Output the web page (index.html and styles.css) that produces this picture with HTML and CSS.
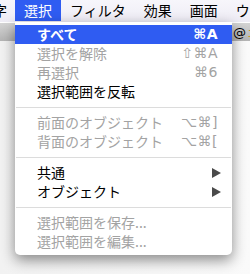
FILE: index.html
```html
<!DOCTYPE html>
<html lang="ja">
<head>
    <meta charset="UTF-8">
    <title>選択メニュー</title>
    <link rel="stylesheet" href="styles.css">
</head>
<body>
    <div class="menubar">
        <span class="menubar-item cut">文字</span>
        <span class="menubar-item active">選択</span>
        <span class="menubar-item">フィルタ</span>
        <span class="menubar-item">効果</span>
        <span class="menubar-item">画面</span>
        <span class="menubar-item">ウィンドウ</span>
    </div>
    <div class="toolbar">
        <span class="tool-at">@</span>
        <span class="tool-mark">ﾆ</span>
    </div>
    <div class="content"></div>

    <!-- dropdown menu -->
    <div class="menu">
        <div class="menu-item selected">
            <span class="label">すべて</span>
            <span class="key">⌘A</span>
        </div>
        <div class="menu-item disabled">
            <span class="label">選択を解除</span>
            <span class="key">⇧⌘A</span>
        </div>
        <div class="menu-item disabled">
            <span class="label">再選択</span>
            <span class="key">⌘6</span>
        </div>
        <div class="menu-item">
            <span class="label">選択範囲を反転</span>
        </div>
        <div class="separator"></div>
        <div class="menu-item disabled">
            <span class="label">前面のオブジェクト</span>
            <span class="key">⌥⌘]</span>
        </div>
        <div class="menu-item disabled">
            <span class="label">背面のオブジェクト</span>
            <span class="key">⌥⌘[</span>
        </div>
        <div class="separator"></div>
        <div class="menu-item">
            <span class="label">共通</span>
            <span class="arrow"></span>
        </div>
        <div class="menu-item">
            <span class="label">オブジェクト</span>
            <span class="arrow"></span>
        </div>
        <div class="separator"></div>
        <div class="menu-item disabled">
            <span class="label">選択範囲を保存...</span>
        </div>
        <div class="menu-item disabled">
            <span class="label">選択範囲を編集...</span>
        </div>
    </div>
</body>
</html>
```

FILE: styles.css
```css
/* Global */
* {
    margin: 0;
    padding: 0;
    box-sizing: border-box;
}

body {
    width: 250px;
    height: 274px;
    overflow: hidden;
    position: relative;
    background: #f4f4f4;
    font-family: "Noto Sans CJK JP", sans-serif;
    font-size: 14px;
    color: #000;
}

/* Menu bar */
.menubar {
    display: flex;
    height: 22px;
    background: linear-gradient(#f7f6fb, #eeecf5);
    white-space: nowrap;
    overflow: hidden;
}

.menubar-item {
    padding: 0 9px;
    line-height: 21px;
    height: 21px;
}

.menubar-item.cut {
    margin-left: -30px;
    padding-right: 8px;
}

.menubar-item.active {
    background: #2f5cf2;
    color: #ffffff;
}

/* Toolbar strip under the menu bar */
.toolbar {
    display: flex;
    align-items: center;
    height: 19px;
    border-top: 1px solid #ffffff;
    background: linear-gradient(#d4d4d4, #b4b4b4);
}

.tool-at {
    margin-left: 233px;
    font-family: "DejaVu Sans", sans-serif;
    font-size: 13px;
}

.tool-mark {
    margin-left: 2px;
    color: #c89a20;
    font-size: 12px;
}

.content {
    height: 233px;
    background: linear-gradient(90deg, #f2f2f2, #fafafa);
}

/* Dropdown menu */
.menu {
    position: absolute;
    left: 15px;
    top: 22px;
    width: 217px;
    padding: 3px 0 4px;
    background: #ffffff;
    border-radius: 0 0 5px 5px;
    box-shadow: 0 5px 14px rgba(0, 0, 0, 0.45);
}

.menu-item {
    display: flex;
    align-items: center;
    justify-content: space-between;
    height: 19px;
    padding: 0 14px 0 22px;
    line-height: 19px;
}

.menu-item.selected {
    background: #2f5cf2;
    color: #ffffff;
    font-weight: bold;
}

.menu-item.disabled {
    color: #a3a3a3;
}

.key {
    font-family: "DejaVu Sans", sans-serif;
    font-size: 14px;
    letter-spacing: 0.5px;
}

.selected .key {
    font-weight: bold;
}

.arrow {
    width: 0;
    height: 0;
    margin-right: -3px;
    border-top: 5px solid transparent;
    border-bottom: 5px solid transparent;
    border-left: 9px solid #4a4a4a;
}

.separator {
    height: 12px;
    display: flex;
    align-items: center;
    padding: 0 1px;
}

.separator::before {
    content: "";
    flex: 1;
    height: 1px;
    background: #dcdcdc;
}
```
